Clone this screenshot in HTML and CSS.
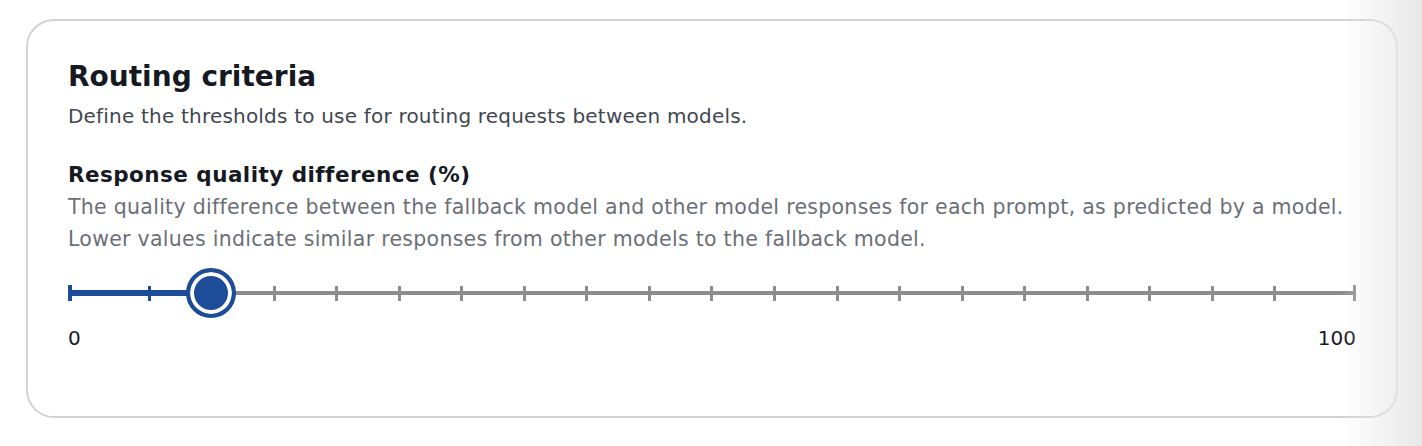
FILE: index.html
```html
<!DOCTYPE html>
<html>
  <head>
    <meta charset="UTF-8" />
    <title>Routing criteria</title>
    <link rel="stylesheet" href="styles.css">
  </head>
  <body>

    <div class="page">
      <section class="card">
        <h2 class="card-title">Routing criteria</h2>
        <p class="card-desc">Define the thresholds to use for routing requests between models.</p>

        <div class="field">
          <label class="field-label" for="qualityDiff">Response quality difference (%)</label>
          <p class="field-desc">The quality difference between the fallback model and other model responses for each prompt, as predicted by a model. Lower values indicate similar responses from other models to the fallback model.</p>

          <div class="slider" id="qualityDiff">
            <div class="slider-rail"></div>
            <div class="slider-fill" style="width: 143px;"></div>
            <div class="slider-ticks">
              <span class="tick tick-edge"></span>
              <span class="tick tick-on"></span>
              <span class="tick tick-on"></span>
              <span class="tick"></span>
              <span class="tick"></span>
              <span class="tick"></span>
              <span class="tick"></span>
              <span class="tick"></span>
              <span class="tick"></span>
              <span class="tick"></span>
              <span class="tick"></span>
              <span class="tick"></span>
              <span class="tick"></span>
              <span class="tick"></span>
              <span class="tick"></span>
              <span class="tick"></span>
              <span class="tick"></span>
              <span class="tick"></span>
              <span class="tick"></span>
              <span class="tick"></span>
              <span class="tick tick-edge"></span>
            </div>
            <span class="cap cap-start"></span>
            <span class="cap cap-end"></span>
            <span class="slider-thumb" style="left: 143px;"></span>
          </div>

          <div class="slider-labels">
            <span>0</span>
            <span>100</span>
          </div>
        </div>
      </section>
    </div>

  </body>
</html>
```

FILE: styles.css
```css
body {
  margin: 0;
  font-family: 'DejaVu Sans', 'Noto Sans', sans-serif;
  color: #16191f;
  background: #fff;
}

/* soft shade along the right edge of the window */
body::after {
  content: "";
  position: fixed;
  top: 0;
  right: 0;
  bottom: 0;
  width: 80px;
  background: linear-gradient(to right, rgba(232, 232, 232, 0), rgba(232, 232, 232, 1));
  pointer-events: none;
}

.page {
  padding: 19px 24px 0 26px;
}

.card {
  box-sizing: border-box;
  width: 1372px;
  border: 2px solid #d3d3d6;
  border-radius: 28px;
  padding: 38px 40px 62px 40px;
  background: #fff;
}

.card-title {
  margin: 0;
  font-size: 28px;
  line-height: 36px;
  font-weight: 700;
}

.card-desc {
  margin: 5px 0 0;
  font-size: 20px;
  line-height: 32px;
  letter-spacing: 0.2px;
  color: #414750;
}

.field {
  margin-top: 27px;
}

.field-label {
  display: block;
  font-size: 21.5px;
  line-height: 32px;
  letter-spacing: 0.45px;
  font-weight: 700;
}

.field-desc {
  margin: 0;
  font-size: 20.5px;
  line-height: 32px;
  letter-spacing: 0.28px;
  color: #6b7077;
}

/* slider */
.slider {
  position: relative;
  height: 50px;
  margin-top: 13px;
}

.slider-rail {
  position: absolute;
  left: 0;
  right: 0;
  top: 23px;
  height: 4px;
  background: #8d8d8d;
}

.slider-fill {
  position: absolute;
  left: 0;
  top: 22px;
  height: 6px;
  background: #1d4c99;
}

.slider-ticks {
  position: relative;
  height: 100%;
  padding: 0 17px;
  display: flex;
  justify-content: space-between;
  align-items: center;
}

.tick {
  width: 3px;
  height: 15px;
  background: #8d8d8d;
}

.tick-on {
  background: #1d4c99;
}

.tick-edge {
  visibility: hidden;
}

.cap {
  position: absolute;
  top: 17px;
  width: 4px;
  height: 16px;
}

.cap-start {
  left: 0;
  background: #1d4c99;
}

.cap-end {
  right: 0;
  width: 3px;
  background: #8d8d8d;
}

.slider-thumb {
  position: absolute;
  top: 0;
  box-sizing: border-box;
  width: 50px;
  height: 50px;
  margin-left: -25px;
  border-radius: 50%;
  border: 4px solid #1d4c99;
  background: #1d4c99;
  box-shadow: inset 0 0 0 4px #fff;
}

.slider-labels {
  display: flex;
  justify-content: space-between;
  margin-top: 4px;
  font-size: 20px;
  line-height: 32px;
}
```
